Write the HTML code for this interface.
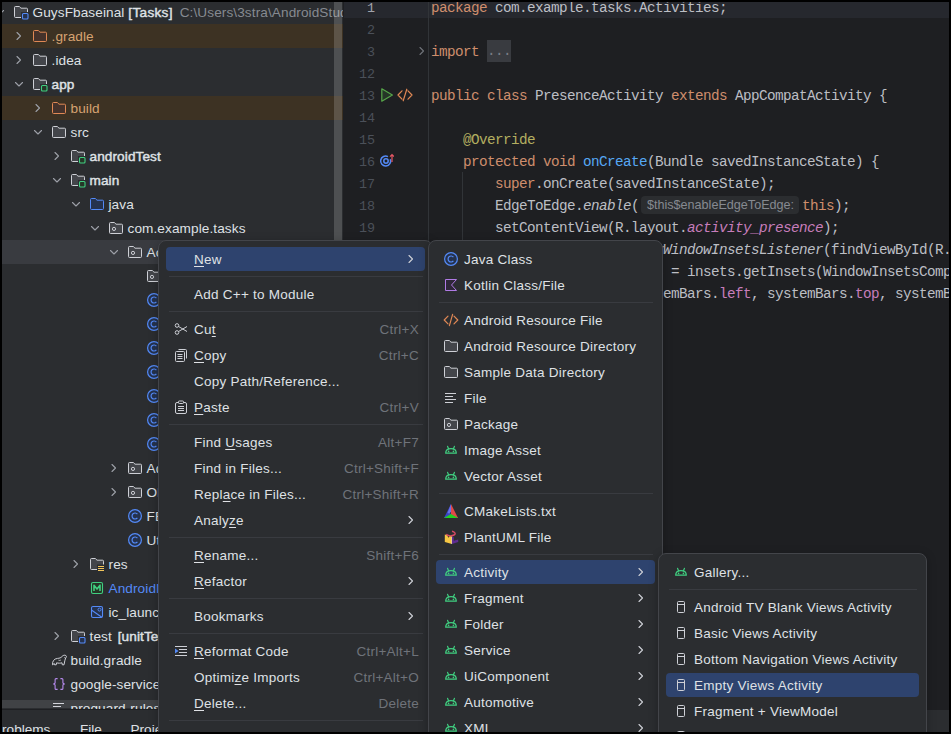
<!DOCTYPE html><html><head><meta charset="utf-8"><style>html,body{margin:0;padding:0;}body{width:951px;height:734px;overflow:hidden;background:#000;position:relative;}b{font-weight:normal;-webkit-text-stroke:0.45px currentColor;}.u{text-decoration:underline;text-underline-offset:1.5px;text-decoration-thickness:1px;}</style></head><body>
<div style="position:absolute;left:2px;top:2px;width:341px;height:730px;background:#2B2D30;overflow:hidden">
<svg style="position:absolute;left:-10.0px;top:2px" width="16" height="16" viewBox="0 0 16 16"><path d="M4.5 6.5l3.5 3.5 3.5-3.5" fill="none" stroke="#9DA0A8" stroke-width="1.1" stroke-linecap="round" stroke-linejoin="round"/></svg>
<svg style="position:absolute;left:10.5px;top:2px" width="16" height="16" viewBox="0 0 16 16"><path d="M2.5 2.5h3.8l1.7 1.7h5.5a1 1 0 0 1 1 1v7.3a1 1 0 0 1-1 1h-11a1 1 0 0 1-1-1v-9a1 1 0 0 1 1-1z" fill="#43454A" stroke="#CED0D6" stroke-width="1"/><rect x="8" y="8" width="8.5" height="8.5" fill="#2B2D30"/><rect x="9.5" y="9.5" width="5.5" height="5.5" rx="1" fill="#25324D" stroke="#548AF7" stroke-width="1.1"/></svg>
<div style="position:absolute;left:30.5px;top:-1px;font:normal 13.6px/24px 'Liberation Sans', sans-serif;color:#DFE1E5;white-space:pre;letter-spacing:0.1px">GuysFbaseinal <b style="letter-spacing:0.3px">[Tasks]</b> <span style="color:#868A91;margin-left:3px">C:\Users\3stra\AndroidStudioProjects</span></div>
<div style="position:absolute;left:0;top:22px;width:341px;height:24px;background:#3D3223"></div>
<svg style="position:absolute;left:9.0px;top:26px" width="16" height="16" viewBox="0 0 16 16"><path d="M6 4.5l3.5 3.5-3.5 3.5" fill="none" stroke="#9DA0A8" stroke-width="1.1" stroke-linecap="round" stroke-linejoin="round"/></svg>
<svg style="position:absolute;left:29.5px;top:26px" width="16" height="16" viewBox="0 0 16 16"><path d="M2.5 2.5h3.8l1.7 1.7h5.5a1 1 0 0 1 1 1v7.3a1 1 0 0 1-1 1h-11a1 1 0 0 1-1-1v-9a1 1 0 0 1 1-1z" fill="#45322B" stroke="#E08855" stroke-width="1"/></svg>
<div style="position:absolute;left:49.5px;top:23px;font:normal 13.6px/24px 'Liberation Sans', sans-serif;color:#DFE1E5;white-space:pre;letter-spacing:0.1px"><span style="color:#D6A372">.gradle</span></div>
<svg style="position:absolute;left:9.0px;top:50px" width="16" height="16" viewBox="0 0 16 16"><path d="M6 4.5l3.5 3.5-3.5 3.5" fill="none" stroke="#9DA0A8" stroke-width="1.1" stroke-linecap="round" stroke-linejoin="round"/></svg>
<svg style="position:absolute;left:29.5px;top:50px" width="16" height="16" viewBox="0 0 16 16"><path d="M2.5 2.5h3.8l1.7 1.7h5.5a1 1 0 0 1 1 1v7.3a1 1 0 0 1-1 1h-11a1 1 0 0 1-1-1v-9a1 1 0 0 1 1-1z" fill="#43454A" stroke="#CED0D6" stroke-width="1"/></svg>
<div style="position:absolute;left:49.5px;top:47px;font:normal 13.6px/24px 'Liberation Sans', sans-serif;color:#DFE1E5;white-space:pre;letter-spacing:0.1px">.idea</div>
<svg style="position:absolute;left:9.0px;top:74px" width="16" height="16" viewBox="0 0 16 16"><path d="M4.5 6.5l3.5 3.5 3.5-3.5" fill="none" stroke="#9DA0A8" stroke-width="1.1" stroke-linecap="round" stroke-linejoin="round"/></svg>
<svg style="position:absolute;left:29.5px;top:74px" width="16" height="16" viewBox="0 0 16 16"><path d="M2.5 2.5h3.8l1.7 1.7h5.5a1 1 0 0 1 1 1v7.3a1 1 0 0 1-1 1h-11a1 1 0 0 1-1-1v-9a1 1 0 0 1 1-1z" fill="#43454A" stroke="#CED0D6" stroke-width="1"/><rect x="8" y="8" width="8.5" height="8.5" fill="#2B2D30"/><rect x="9.5" y="9.5" width="5.5" height="5.5" rx="1" fill="#253627" stroke="#40CF80" stroke-width="1.1"/></svg>
<div style="position:absolute;left:49.5px;top:71px;font:normal 13.6px/24px 'Liberation Sans', sans-serif;color:#DFE1E5;white-space:pre;letter-spacing:0.1px"><b>app</b></div>
<div style="position:absolute;left:0;top:94px;width:341px;height:24px;background:#3D3223"></div>
<svg style="position:absolute;left:28.0px;top:98px" width="16" height="16" viewBox="0 0 16 16"><path d="M6 4.5l3.5 3.5-3.5 3.5" fill="none" stroke="#9DA0A8" stroke-width="1.1" stroke-linecap="round" stroke-linejoin="round"/></svg>
<svg style="position:absolute;left:48.5px;top:98px" width="16" height="16" viewBox="0 0 16 16"><path d="M2.5 2.5h3.8l1.7 1.7h5.5a1 1 0 0 1 1 1v7.3a1 1 0 0 1-1 1h-11a1 1 0 0 1-1-1v-9a1 1 0 0 1 1-1z" fill="#45322B" stroke="#E08855" stroke-width="1"/></svg>
<div style="position:absolute;left:68.5px;top:95px;font:normal 13.6px/24px 'Liberation Sans', sans-serif;color:#DFE1E5;white-space:pre;letter-spacing:0.1px"><span style="color:#D6A372">build</span></div>
<svg style="position:absolute;left:28.0px;top:122px" width="16" height="16" viewBox="0 0 16 16"><path d="M4.5 6.5l3.5 3.5 3.5-3.5" fill="none" stroke="#9DA0A8" stroke-width="1.1" stroke-linecap="round" stroke-linejoin="round"/></svg>
<svg style="position:absolute;left:48.5px;top:122px" width="16" height="16" viewBox="0 0 16 16"><path d="M2.5 2.5h3.8l1.7 1.7h5.5a1 1 0 0 1 1 1v7.3a1 1 0 0 1-1 1h-11a1 1 0 0 1-1-1v-9a1 1 0 0 1 1-1z" fill="#43454A" stroke="#CED0D6" stroke-width="1"/></svg>
<div style="position:absolute;left:68.5px;top:119px;font:normal 13.6px/24px 'Liberation Sans', sans-serif;color:#DFE1E5;white-space:pre;letter-spacing:0.1px">src</div>
<svg style="position:absolute;left:47.0px;top:146px" width="16" height="16" viewBox="0 0 16 16"><path d="M6 4.5l3.5 3.5-3.5 3.5" fill="none" stroke="#9DA0A8" stroke-width="1.1" stroke-linecap="round" stroke-linejoin="round"/></svg>
<svg style="position:absolute;left:67.5px;top:146px" width="16" height="16" viewBox="0 0 16 16"><path d="M2.5 2.5h3.8l1.7 1.7h5.5a1 1 0 0 1 1 1v7.3a1 1 0 0 1-1 1h-11a1 1 0 0 1-1-1v-9a1 1 0 0 1 1-1z" fill="#43454A" stroke="#CED0D6" stroke-width="1"/><rect x="8" y="8" width="8.5" height="8.5" fill="#2B2D30"/><rect x="9.5" y="9.5" width="5.5" height="5.5" rx="1" fill="#253627" stroke="#40CF80" stroke-width="1.1"/></svg>
<div style="position:absolute;left:87.5px;top:143px;font:normal 13.6px/24px 'Liberation Sans', sans-serif;color:#DFE1E5;white-space:pre;letter-spacing:0.1px"><b>androidTest</b></div>
<svg style="position:absolute;left:47.0px;top:170px" width="16" height="16" viewBox="0 0 16 16"><path d="M4.5 6.5l3.5 3.5 3.5-3.5" fill="none" stroke="#9DA0A8" stroke-width="1.1" stroke-linecap="round" stroke-linejoin="round"/></svg>
<svg style="position:absolute;left:67.5px;top:170px" width="16" height="16" viewBox="0 0 16 16"><path d="M2.5 2.5h3.8l1.7 1.7h5.5a1 1 0 0 1 1 1v7.3a1 1 0 0 1-1 1h-11a1 1 0 0 1-1-1v-9a1 1 0 0 1 1-1z" fill="#43454A" stroke="#CED0D6" stroke-width="1"/><rect x="8" y="8" width="8.5" height="8.5" fill="#2B2D30"/><rect x="9.5" y="9.5" width="5.5" height="5.5" rx="1" fill="#253627" stroke="#40CF80" stroke-width="1.1"/></svg>
<div style="position:absolute;left:87.5px;top:167px;font:normal 13.6px/24px 'Liberation Sans', sans-serif;color:#DFE1E5;white-space:pre;letter-spacing:0.1px"><b>main</b></div>
<svg style="position:absolute;left:66.0px;top:194px" width="16" height="16" viewBox="0 0 16 16"><path d="M4.5 6.5l3.5 3.5 3.5-3.5" fill="none" stroke="#9DA0A8" stroke-width="1.1" stroke-linecap="round" stroke-linejoin="round"/></svg>
<svg style="position:absolute;left:86.5px;top:194px" width="16" height="16" viewBox="0 0 16 16"><path d="M2.5 2.5h3.8l1.7 1.7h5.5a1 1 0 0 1 1 1v7.3a1 1 0 0 1-1 1h-11a1 1 0 0 1-1-1v-9a1 1 0 0 1 1-1z" fill="#25324D" stroke="#548AF7" stroke-width="1"/></svg>
<div style="position:absolute;left:106.5px;top:191px;font:normal 13.6px/24px 'Liberation Sans', sans-serif;color:#DFE1E5;white-space:pre;letter-spacing:0.1px">java</div>
<svg style="position:absolute;left:85.0px;top:218px" width="16" height="16" viewBox="0 0 16 16"><path d="M4.5 6.5l3.5 3.5 3.5-3.5" fill="none" stroke="#9DA0A8" stroke-width="1.1" stroke-linecap="round" stroke-linejoin="round"/></svg>
<svg style="position:absolute;left:105.5px;top:218px" width="16" height="16" viewBox="0 0 16 16"><path d="M2.5 2.5h3.8l1.7 1.7h5.5a1 1 0 0 1 1 1v7.3a1 1 0 0 1-1 1h-11a1 1 0 0 1-1-1v-9a1 1 0 0 1 1-1z" fill="#43454A" stroke="#CED0D6" stroke-width="1"/><circle cx="6" cy="8.9" r="1.6" fill="none" stroke="#CED0D6" stroke-width="1"/></svg>
<div style="position:absolute;left:125.5px;top:215px;font:normal 13.6px/24px 'Liberation Sans', sans-serif;color:#DFE1E5;white-space:pre;letter-spacing:0.1px">com.example.tasks</div>
<div style="position:absolute;left:0;top:238px;width:341px;height:24px;background:#393B40"></div>
<svg style="position:absolute;left:104.0px;top:242px" width="16" height="16" viewBox="0 0 16 16"><path d="M4.5 6.5l3.5 3.5 3.5-3.5" fill="none" stroke="#9DA0A8" stroke-width="1.1" stroke-linecap="round" stroke-linejoin="round"/></svg>
<svg style="position:absolute;left:124.5px;top:242px" width="16" height="16" viewBox="0 0 16 16"><path d="M2.5 2.5h3.8l1.7 1.7h5.5a1 1 0 0 1 1 1v7.3a1 1 0 0 1-1 1h-11a1 1 0 0 1-1-1v-9a1 1 0 0 1 1-1z" fill="#43454A" stroke="#CED0D6" stroke-width="1"/><circle cx="6" cy="8.9" r="1.6" fill="none" stroke="#CED0D6" stroke-width="1"/></svg>
<div style="position:absolute;left:144.5px;top:239px;font:normal 13.6px/24px 'Liberation Sans', sans-serif;color:#DFE1E5;white-space:pre;letter-spacing:0.1px">Activities</div>
<svg style="position:absolute;left:143.5px;top:266px" width="16" height="16" viewBox="0 0 16 16"><path d="M2.5 2.5h3.8l1.7 1.7h5.5a1 1 0 0 1 1 1v7.3a1 1 0 0 1-1 1h-11a1 1 0 0 1-1-1v-9a1 1 0 0 1 1-1z" fill="#43454A" stroke="#CED0D6" stroke-width="1"/><circle cx="6" cy="8.9" r="1.6" fill="none" stroke="#CED0D6" stroke-width="1"/></svg>
<div style="position:absolute;left:163.5px;top:263px;font:normal 13.6px/24px 'Liberation Sans', sans-serif;color:#DFE1E5;white-space:pre;letter-spacing:0.1px">Adapters</div>
<svg style="position:absolute;left:143.5px;top:290px" width="16" height="16" viewBox="0 0 16 16"><circle cx="8" cy="8" r="6.4" fill="#25324D" stroke="#548AF7" stroke-width="1.2"/><path d="M10.4 6.1a3 3 0 1 0 0 3.8" fill="none" stroke="#548AF7" stroke-width="1.2"/></svg>
<div style="position:absolute;left:163.5px;top:287px;font:normal 13.6px/24px 'Liberation Sans', sans-serif;color:#DFE1E5;white-space:pre;letter-spacing:0.1px">A</div>
<svg style="position:absolute;left:143.5px;top:314px" width="16" height="16" viewBox="0 0 16 16"><circle cx="8" cy="8" r="6.4" fill="#25324D" stroke="#548AF7" stroke-width="1.2"/><path d="M10.4 6.1a3 3 0 1 0 0 3.8" fill="none" stroke="#548AF7" stroke-width="1.2"/></svg>
<div style="position:absolute;left:163.5px;top:311px;font:normal 13.6px/24px 'Liberation Sans', sans-serif;color:#DFE1E5;white-space:pre;letter-spacing:0.1px">A</div>
<svg style="position:absolute;left:143.5px;top:338px" width="16" height="16" viewBox="0 0 16 16"><circle cx="8" cy="8" r="6.4" fill="#25324D" stroke="#548AF7" stroke-width="1.2"/><path d="M10.4 6.1a3 3 0 1 0 0 3.8" fill="none" stroke="#548AF7" stroke-width="1.2"/></svg>
<div style="position:absolute;left:163.5px;top:335px;font:normal 13.6px/24px 'Liberation Sans', sans-serif;color:#DFE1E5;white-space:pre;letter-spacing:0.1px">A</div>
<svg style="position:absolute;left:143.5px;top:362px" width="16" height="16" viewBox="0 0 16 16"><circle cx="8" cy="8" r="6.4" fill="#25324D" stroke="#548AF7" stroke-width="1.2"/><path d="M10.4 6.1a3 3 0 1 0 0 3.8" fill="none" stroke="#548AF7" stroke-width="1.2"/></svg>
<div style="position:absolute;left:163.5px;top:359px;font:normal 13.6px/24px 'Liberation Sans', sans-serif;color:#DFE1E5;white-space:pre;letter-spacing:0.1px">A</div>
<svg style="position:absolute;left:143.5px;top:386px" width="16" height="16" viewBox="0 0 16 16"><circle cx="8" cy="8" r="6.4" fill="#25324D" stroke="#548AF7" stroke-width="1.2"/><path d="M10.4 6.1a3 3 0 1 0 0 3.8" fill="none" stroke="#548AF7" stroke-width="1.2"/></svg>
<div style="position:absolute;left:163.5px;top:383px;font:normal 13.6px/24px 'Liberation Sans', sans-serif;color:#DFE1E5;white-space:pre;letter-spacing:0.1px">A</div>
<svg style="position:absolute;left:143.5px;top:410px" width="16" height="16" viewBox="0 0 16 16"><circle cx="8" cy="8" r="6.4" fill="#25324D" stroke="#548AF7" stroke-width="1.2"/><path d="M10.4 6.1a3 3 0 1 0 0 3.8" fill="none" stroke="#548AF7" stroke-width="1.2"/></svg>
<div style="position:absolute;left:163.5px;top:407px;font:normal 13.6px/24px 'Liberation Sans', sans-serif;color:#DFE1E5;white-space:pre;letter-spacing:0.1px">A</div>
<svg style="position:absolute;left:143.5px;top:434px" width="16" height="16" viewBox="0 0 16 16"><circle cx="8" cy="8" r="6.4" fill="#25324D" stroke="#548AF7" stroke-width="1.2"/><path d="M10.4 6.1a3 3 0 1 0 0 3.8" fill="none" stroke="#548AF7" stroke-width="1.2"/></svg>
<div style="position:absolute;left:163.5px;top:431px;font:normal 13.6px/24px 'Liberation Sans', sans-serif;color:#DFE1E5;white-space:pre;letter-spacing:0.1px">A</div>
<svg style="position:absolute;left:104.0px;top:458px" width="16" height="16" viewBox="0 0 16 16"><path d="M6 4.5l3.5 3.5-3.5 3.5" fill="none" stroke="#9DA0A8" stroke-width="1.1" stroke-linecap="round" stroke-linejoin="round"/></svg>
<svg style="position:absolute;left:124.5px;top:458px" width="16" height="16" viewBox="0 0 16 16"><path d="M2.5 2.5h3.8l1.7 1.7h5.5a1 1 0 0 1 1 1v7.3a1 1 0 0 1-1 1h-11a1 1 0 0 1-1-1v-9a1 1 0 0 1 1-1z" fill="#43454A" stroke="#CED0D6" stroke-width="1"/><circle cx="6" cy="8.9" r="1.6" fill="none" stroke="#CED0D6" stroke-width="1"/></svg>
<div style="position:absolute;left:144.5px;top:455px;font:normal 13.6px/24px 'Liberation Sans', sans-serif;color:#DFE1E5;white-space:pre;letter-spacing:0.1px">Adapters</div>
<svg style="position:absolute;left:104.0px;top:482px" width="16" height="16" viewBox="0 0 16 16"><path d="M6 4.5l3.5 3.5-3.5 3.5" fill="none" stroke="#9DA0A8" stroke-width="1.1" stroke-linecap="round" stroke-linejoin="round"/></svg>
<svg style="position:absolute;left:124.5px;top:482px" width="16" height="16" viewBox="0 0 16 16"><path d="M2.5 2.5h3.8l1.7 1.7h5.5a1 1 0 0 1 1 1v7.3a1 1 0 0 1-1 1h-11a1 1 0 0 1-1-1v-9a1 1 0 0 1 1-1z" fill="#43454A" stroke="#CED0D6" stroke-width="1"/><circle cx="6" cy="8.9" r="1.6" fill="none" stroke="#CED0D6" stroke-width="1"/></svg>
<div style="position:absolute;left:144.5px;top:479px;font:normal 13.6px/24px 'Liberation Sans', sans-serif;color:#DFE1E5;white-space:pre;letter-spacing:0.1px">Objects</div>
<svg style="position:absolute;left:124.5px;top:506px" width="16" height="16" viewBox="0 0 16 16"><circle cx="8" cy="8" r="6.4" fill="#25324D" stroke="#548AF7" stroke-width="1.2"/><path d="M10.4 6.1a3 3 0 1 0 0 3.8" fill="none" stroke="#548AF7" stroke-width="1.2"/></svg>
<div style="position:absolute;left:144.5px;top:503px;font:normal 13.6px/24px 'Liberation Sans', sans-serif;color:#DFE1E5;white-space:pre;letter-spacing:0.1px">FBRef</div>
<svg style="position:absolute;left:124.5px;top:530px" width="16" height="16" viewBox="0 0 16 16"><circle cx="8" cy="8" r="6.4" fill="#25324D" stroke="#548AF7" stroke-width="1.2"/><path d="M10.4 6.1a3 3 0 1 0 0 3.8" fill="none" stroke="#548AF7" stroke-width="1.2"/></svg>
<div style="position:absolute;left:144.5px;top:527px;font:normal 13.6px/24px 'Liberation Sans', sans-serif;color:#DFE1E5;white-space:pre;letter-spacing:0.1px">Utils</div>
<svg style="position:absolute;left:66.0px;top:554px" width="16" height="16" viewBox="0 0 16 16"><path d="M6 4.5l3.5 3.5-3.5 3.5" fill="none" stroke="#9DA0A8" stroke-width="1.1" stroke-linecap="round" stroke-linejoin="round"/></svg>
<svg style="position:absolute;left:86.5px;top:554px" width="16" height="16" viewBox="0 0 16 16"><path d="M2.5 2.5h3.8l1.7 1.7h5.5a1 1 0 0 1 1 1v7.3a1 1 0 0 1-1 1h-11a1 1 0 0 1-1-1v-9a1 1 0 0 1 1-1z" fill="#43454A" stroke="#CED0D6" stroke-width="1"/><rect x="8" y="8.5" width="9" height="8" fill="#2B2D30"/><path d="M9 10.5h6M9 12.5h6M9 14.5h6" stroke="#F2C55C" stroke-width="1.1"/></svg>
<div style="position:absolute;left:106.5px;top:551px;font:normal 13.6px/24px 'Liberation Sans', sans-serif;color:#DFE1E5;white-space:pre;letter-spacing:0.1px">res</div>
<svg style="position:absolute;left:86.5px;top:578px" width="16" height="16" viewBox="0 0 16 16"><rect x="2.5" y="2.5" width="11" height="11" rx="1.5" fill="#253627" stroke="#40CF80" stroke-width="1.1"/><path d="M5 11V5.2l3 3.8 3-3.8V11" fill="none" stroke="#40CF80" stroke-width="1.6" stroke-linejoin="round"/></svg>
<div style="position:absolute;left:106.5px;top:575px;font:normal 13.6px/24px 'Liberation Sans', sans-serif;color:#DFE1E5;white-space:pre;letter-spacing:0.1px"><span style="color:#548AF7">AndroidManifest.xml</span></div>
<svg style="position:absolute;left:86.5px;top:602px" width="16" height="16" viewBox="0 0 16 16"><rect x="2.5" y="2.5" width="11" height="11" rx="1.5" fill="#25324D" stroke="#548AF7" stroke-width="1.1"/><path d="M2.8 6.2l10 7" stroke="#548AF7" stroke-width="1.1"/><circle cx="10.5" cy="5.6" r="1.5" fill="none" stroke="#548AF7" stroke-width="1"/></svg>
<div style="position:absolute;left:106.5px;top:599px;font:normal 13.6px/24px 'Liberation Sans', sans-serif;color:#DFE1E5;white-space:pre;letter-spacing:0.1px">ic_launcher-playstore.png</div>
<svg style="position:absolute;left:47.0px;top:626px" width="16" height="16" viewBox="0 0 16 16"><path d="M6 4.5l3.5 3.5-3.5 3.5" fill="none" stroke="#9DA0A8" stroke-width="1.1" stroke-linecap="round" stroke-linejoin="round"/></svg>
<svg style="position:absolute;left:67.5px;top:626px" width="16" height="16" viewBox="0 0 16 16"><path d="M2.5 2.5h3.8l1.7 1.7h5.5a1 1 0 0 1 1 1v7.3a1 1 0 0 1-1 1h-11a1 1 0 0 1-1-1v-9a1 1 0 0 1 1-1z" fill="#43454A" stroke="#CED0D6" stroke-width="1"/><rect x="8" y="8" width="8.5" height="8.5" fill="#2B2D30"/><rect x="9.5" y="9.5" width="5.5" height="5.5" rx="1" fill="#25324D" stroke="#548AF7" stroke-width="1.1"/></svg>
<div style="position:absolute;left:87.5px;top:623px;font:normal 13.6px/24px 'Liberation Sans', sans-serif;color:#DFE1E5;white-space:pre;letter-spacing:0.1px">test <b style="margin-left:2px">[unitTest]</b></div>
<svg style="position:absolute;left:48.5px;top:650px" width="16" height="16" viewBox="0 0 16 16"><path d="M1.5 12.8C1.2 9.3 3 6.8 6.5 6.4c2-.2 3.3-.4 4.5-1.9 1-1.2 2.6-1.7 3.8-1 1 .6.8 2.1-.2 2.5l-.8 2.8-.8 4H11.3l-.3-2c-1.4.5-3.8.5-5.4 0l-.4 2H3.6l-.3-1.3z" fill="none" stroke="#CED0D6" stroke-width="1" stroke-linejoin="round"/><path d="M14.6 6c-.7.3-1.2-.3-.8-.8M7.5 8.2c.9.4 1.8.3 2.4-.3" fill="none" stroke="#CED0D6" stroke-width=".9"/></svg>
<div style="position:absolute;left:68.5px;top:647px;font:normal 13.6px/24px 'Liberation Sans', sans-serif;color:#DFE1E5;white-space:pre;letter-spacing:0.1px">build.gradle</div>
<svg style="position:absolute;left:48.5px;top:674px" width="16" height="16" viewBox="0 0 16 16"><path d="M6.6 2.6H5.1a1 1 0 0 0-1 1V7L2.7 8 4.1 9v3.4a1 1 0 0 0 1 1h1.5M9.4 2.6h1.5a1 1 0 0 1 1 1V7l1.4 1-1.4 1v3.4a1 1 0 0 1-1 1H9.4" fill="none" stroke="#B589EC" stroke-width="1.1" stroke-linejoin="round"/></svg>
<div style="position:absolute;left:68.5px;top:671px;font:normal 13.6px/24px 'Liberation Sans', sans-serif;color:#DFE1E5;white-space:pre;letter-spacing:0.1px">google-services.json</div>
<svg style="position:absolute;left:48.5px;top:698px" width="16" height="16" viewBox="0 0 16 16"><path d="M2 3.5h11M2 6.5h8M2 9.5h11M2 12.5h8" stroke="#CED0D6" stroke-width="1"/></svg>
<div style="position:absolute;left:68.5px;top:695px;font:normal 13.6px/24px 'Liberation Sans', sans-serif;color:#DFE1E5;white-space:pre;letter-spacing:0.1px">proguard-rules.pro</div>
<div style="position:absolute;left:0;top:698px;width:341px;height:8px;background:rgba(255,255,255,0.1)"></div>
<div style="position:absolute;left:332px;top:0;width:8px;height:238px;background:rgba(255,255,255,0.17)"></div>
</div>
<div style="position:absolute;left:343px;top:2px;width:606px;height:730px;background:#1E1F22;overflow:hidden">
<div style="position:absolute;left:1px;top:-6px;width:620px;height:22px;background:#26282E"></div>
<div style="position:absolute;left:85px;top:0;width:1px;height:730px;background:#313438"></div>
<div style="position:absolute;left:-12px;top:-4.5px;width:44px;text-align:right;font:13.4px/22px 'Liberation Mono', monospace;color:#A1A3AB">1</div>
<div style="position:absolute;left:88px;top:-5px;font:14.3px/22px 'Liberation Mono', monospace;letter-spacing:-0.58px;white-space:pre"><span style="color:#CF8E6D;">package </span><span style="color:#BCBEC4;">com.example.tasks.Activities;</span></div>
<div style="position:absolute;left:-12px;top:17.5px;width:44px;text-align:right;font:13.4px/22px 'Liberation Mono', monospace;color:#4B5059">2</div>
<div style="position:absolute;left:-12px;top:39.5px;width:44px;text-align:right;font:13.4px/22px 'Liberation Mono', monospace;color:#4B5059">3</div>
<div style="position:absolute;left:88px;top:39px;font:14.3px/22px 'Liberation Mono', monospace;letter-spacing:-0.58px;white-space:pre"><span style="color:#CF8E6D;">import </span><span style="color:#7A7E85;background:#393B40;display:inline-block;height:22px;vertical-align:top;position:relative;top:-1px">...</span></div>
<div style="position:absolute;left:-12px;top:61.5px;width:44px;text-align:right;font:13.4px/22px 'Liberation Mono', monospace;color:#4B5059">12</div>
<div style="position:absolute;left:-12px;top:83.5px;width:44px;text-align:right;font:13.4px/22px 'Liberation Mono', monospace;color:#4B5059">13</div>
<div style="position:absolute;left:88px;top:83px;font:14.3px/22px 'Liberation Mono', monospace;letter-spacing:-0.58px;white-space:pre"><span style="color:#CF8E6D;">public class </span><span style="color:#BCBEC4;">PresenceActivity </span><span style="color:#CF8E6D;">extends </span><span style="color:#BCBEC4;">AppCompatActivity {</span></div>
<div style="position:absolute;left:-12px;top:105.5px;width:44px;text-align:right;font:13.4px/22px 'Liberation Mono', monospace;color:#4B5059">14</div>
<div style="position:absolute;left:-12px;top:127.5px;width:44px;text-align:right;font:13.4px/22px 'Liberation Mono', monospace;color:#4B5059">15</div>
<div style="position:absolute;left:88px;top:127px;font:14.3px/22px 'Liberation Mono', monospace;letter-spacing:-0.58px;white-space:pre"><span style="color:#BCBEC4;">    </span><span style="color:#B3AE60;">@Override</span></div>
<div style="position:absolute;left:-12px;top:149.5px;width:44px;text-align:right;font:13.4px/22px 'Liberation Mono', monospace;color:#4B5059">16</div>
<div style="position:absolute;left:88px;top:149px;font:14.3px/22px 'Liberation Mono', monospace;letter-spacing:-0.58px;white-space:pre"><span style="color:#BCBEC4;">    </span><span style="color:#CF8E6D;">protected void </span><span style="color:#56A8F5;">onCreate</span><span style="color:#BCBEC4;">(Bundle savedInstanceState) {</span></div>
<div style="position:absolute;left:-12px;top:171.5px;width:44px;text-align:right;font:13.4px/22px 'Liberation Mono', monospace;color:#4B5059">17</div>
<div style="position:absolute;left:88px;top:171px;font:14.3px/22px 'Liberation Mono', monospace;letter-spacing:-0.58px;white-space:pre"><span style="color:#BCBEC4;">        </span><span style="color:#CF8E6D;">super</span><span style="color:#BCBEC4;">.onCreate(savedInstanceState);</span></div>
<div style="position:absolute;left:-12px;top:193.5px;width:44px;text-align:right;font:13.4px/22px 'Liberation Mono', monospace;color:#4B5059">18</div>
<div style="position:absolute;left:88px;top:193px;font:14.3px/22px 'Liberation Mono', monospace;letter-spacing:-0.58px;white-space:pre"><span style="color:#BCBEC4;">        EdgeToEdge.</span><span style="color:#BCBEC4;font-style:italic;">enable</span><span style="color:#BCBEC4;">(</span><span style="display:inline-block;width:163px"></span><span style="color:#CF8E6D;">this</span><span style="color:#BCBEC4;">);</span></div>
<div style="position:absolute;left:-12px;top:215.5px;width:44px;text-align:right;font:13.4px/22px 'Liberation Mono', monospace;color:#4B5059">19</div>
<div style="position:absolute;left:88px;top:215px;font:14.3px/22px 'Liberation Mono', monospace;letter-spacing:-0.58px;white-space:pre"><span style="color:#BCBEC4;">        setContentView(R.layout.</span><span style="color:#C77DBB;font-style:italic;">activity_presence</span><span style="color:#BCBEC4;">);</span></div>
<div style="position:absolute;left:-12px;top:237.5px;width:44px;text-align:right;font:13.4px/22px 'Liberation Mono', monospace;color:#4B5059">20</div>
<div style="position:absolute;left:88px;top:237px;font:14.3px/22px 'Liberation Mono', monospace;letter-spacing:-0.58px;white-space:pre"><span style="color:#BCBEC4;">        ViewCompat.</span><span style="color:#BCBEC4;font-style:italic;">setOnApplyWindowInsetsListener</span><span style="color:#BCBEC4;">(findViewById(R.id.main), (v, insets) -> {</span></div>
<div style="position:absolute;left:-12px;top:259.5px;width:44px;text-align:right;font:13.4px/22px 'Liberation Mono', monospace;color:#4B5059">21</div>
<div style="position:absolute;left:88px;top:259px;font:14.3px/22px 'Liberation Mono', monospace;letter-spacing:-0.58px;white-space:pre"><span style="color:#BCBEC4;">            Insets systemBars = insets.getInsets(WindowInsetsCompat.Type.systemBars());</span></div>
<div style="position:absolute;left:-12px;top:281.5px;width:44px;text-align:right;font:13.4px/22px 'Liberation Mono', monospace;color:#4B5059">22</div>
<div style="position:absolute;left:88px;top:281px;font:14.3px/22px 'Liberation Mono', monospace;letter-spacing:-0.58px;white-space:pre"><span style="color:#BCBEC4;">            v.setPadding(systemBars.</span><span style="color:#C77DBB;">left</span><span style="color:#BCBEC4;">, systemBars.</span><span style="color:#C77DBB;">top</span><span style="color:#BCBEC4;">, systemBars.</span><span style="color:#C77DBB;">right</span><span style="color:#BCBEC4;">, systemBars.</span><span style="color:#C77DBB;">bottom</span><span style="color:#BCBEC4;">);</span></div>
<div style="position:absolute;left:-12px;top:303.5px;width:44px;text-align:right;font:13.4px/22px 'Liberation Mono', monospace;color:#4B5059">23</div>
<div style="position:absolute;left:88px;top:303px;font:14.3px/22px 'Liberation Mono', monospace;letter-spacing:-0.58px;white-space:pre"><span style="color:#BCBEC4;">            </span><span style="color:#CF8E6D;">return </span><span style="color:#BCBEC4;">insets;</span></div>
<div style="position:absolute;left:-12px;top:325.5px;width:44px;text-align:right;font:13.4px/22px 'Liberation Mono', monospace;color:#4B5059">24</div>
<div style="position:absolute;left:88px;top:325px;font:14.3px/22px 'Liberation Mono', monospace;letter-spacing:-0.58px;white-space:pre"><span style="color:#BCBEC4;">        });</span></div>
<div style="position:absolute;left:-12px;top:347.5px;width:44px;text-align:right;font:13.4px/22px 'Liberation Mono', monospace;color:#4B5059">25</div>
<div style="position:absolute;left:88px;top:347px;font:14.3px/22px 'Liberation Mono', monospace;letter-spacing:-0.58px;white-space:pre"><span style="color:#BCBEC4;">    }</span></div>
<div style="position:absolute;left:-12px;top:369.5px;width:44px;text-align:right;font:13.4px/22px 'Liberation Mono', monospace;color:#4B5059">26</div>
<div style="position:absolute;left:-12px;top:391.5px;width:44px;text-align:right;font:13.4px/22px 'Liberation Mono', monospace;color:#4B5059">27</div>
<div style="position:absolute;left:88px;top:391px;font:14.3px/22px 'Liberation Mono', monospace;letter-spacing:-0.58px;white-space:pre"><span style="color:#BCBEC4;">}</span></div>
<div style="position:absolute;left:-12px;top:413.5px;width:44px;text-align:right;font:13.4px/22px 'Liberation Mono', monospace;color:#4B5059">28</div>
<div style="position:absolute;left:-12px;top:435.5px;width:44px;text-align:right;font:13.4px/22px 'Liberation Mono', monospace;color:#4B5059">29</div>
<div style="position:absolute;left:-12px;top:457.5px;width:44px;text-align:right;font:13.4px/22px 'Liberation Mono', monospace;color:#4B5059">30</div>
<div style="position:absolute;left:-12px;top:479.5px;width:44px;text-align:right;font:13.4px/22px 'Liberation Mono', monospace;color:#4B5059">31</div>
<div style="position:absolute;left:-12px;top:501.5px;width:44px;text-align:right;font:13.4px/22px 'Liberation Mono', monospace;color:#4B5059">32</div>
<div style="position:absolute;left:-12px;top:523.5px;width:44px;text-align:right;font:13.4px/22px 'Liberation Mono', monospace;color:#4B5059">33</div>
<div style="position:absolute;left:-12px;top:545.5px;width:44px;text-align:right;font:13.4px/22px 'Liberation Mono', monospace;color:#4B5059">34</div>
<div style="position:absolute;left:-12px;top:567.5px;width:44px;text-align:right;font:13.4px/22px 'Liberation Mono', monospace;color:#4B5059">35</div>
<div style="position:absolute;left:-12px;top:589.5px;width:44px;text-align:right;font:13.4px/22px 'Liberation Mono', monospace;color:#4B5059">36</div>
<div style="position:absolute;left:-12px;top:611.5px;width:44px;text-align:right;font:13.4px/22px 'Liberation Mono', monospace;color:#4B5059">37</div>
<div style="position:absolute;left:-12px;top:633.5px;width:44px;text-align:right;font:13.4px/22px 'Liberation Mono', monospace;color:#4B5059">38</div>
<div style="position:absolute;left:-12px;top:655.5px;width:44px;text-align:right;font:13.4px/22px 'Liberation Mono', monospace;color:#4B5059">39</div>
<div style="position:absolute;left:-12px;top:677.5px;width:44px;text-align:right;font:13.4px/22px 'Liberation Mono', monospace;color:#4B5059">40</div>
<div style="position:absolute;left:-12px;top:699.5px;width:44px;text-align:right;font:13.4px/22px 'Liberation Mono', monospace;color:#4B5059">41</div>
<svg style="position:absolute;left:71px;top:41px" width="16" height="16" viewBox="0 0 16 16"><path d="M6 4.5l3.5 3.5-3.5 3.5" fill="none" stroke="#6F737A" stroke-width="1.1" stroke-linecap="round" stroke-linejoin="round"/></svg>
<div style="position:absolute;left:119px;top:170px;width:1px;height:176px;background:#313438"></div>
<div style="position:absolute;left:298px;top:194px;width:158px;height:18px;border-radius:4px;background:#2B2D30"></div>
<div style="position:absolute;left:304px;top:194px;font:12.6px/18px 'Liberation Sans', sans-serif;color:#868A91;white-space:pre">$this$enableEdgeToEdge:</div>
<svg style="position:absolute;left:36px;top:85px" width="16" height="16" viewBox="0 0 16 16"><path d="M2.8 1.8v12.4l10.6-6.2z" fill="#253627" stroke="#57A64A" stroke-width="1.2" stroke-linejoin="round"/></svg>
<svg style="position:absolute;left:54px;top:85px" width="16" height="16" viewBox="0 0 16 16"><path d="M5 3.8L1 8l4 4.2M11 3.8L15 8l-4 4.2M9.8 2.2l-3.6 11.6" fill="none" stroke="#E08855" stroke-width="1.2" stroke-linecap="round" stroke-linejoin="round"/></svg>
<svg style="position:absolute;left:35px;top:150px" width="16" height="16" viewBox="0 0 16 16"><path d="M12.3 7.2A5 5 0 1 1 10 4.6" fill="none" stroke="#548AF7" stroke-width="1.5"/><circle cx="8" cy="9" r="2.2" fill="none" stroke="#548AF7" stroke-width="1.5"/><path d="M14 10V2.5M12 4.6l2-2.1 2 2.1" fill="none" stroke="#E55765" stroke-width="1.2"/></svg>
</div>
<div style="position:absolute;left:2px;top:709px;width:947px;height:1px;background:#1E1F22"></div>
<div style="position:absolute;left:2px;top:710px;width:947px;height:24px;background:#2B2D30;overflow:hidden">
<div style="position:absolute;left:-9px;top:8px;font:normal 13.6px/24px 'Liberation Sans', sans-serif;color:#DFE1E5;white-space:pre;">Problems</div>
<div style="position:absolute;left:78px;top:8px;font:normal 13.6px/24px 'Liberation Sans', sans-serif;color:#DFE1E5;white-space:pre;">File</div>
<div style="position:absolute;left:128.5px;top:8px;font:normal 13.6px/24px 'Liberation Sans', sans-serif;color:#DFE1E5;white-space:pre;">Project Errors</div>
</div>
<div style="position:absolute;left:158px;top:240px;width:273px;height:520px;background:#2B2D30;border:1px solid #43454A;border-radius:8px;box-shadow:0 2px 10px rgba(0,0,0,0.25)"></div>
<div style="position:absolute;left:166px;top:247px;width:259px;height:24px;border-radius:4px;background:#2E436E"></div>
<div style="position:absolute;left:194px;top:247px;font:13.5px/26px 'Liberation Sans', sans-serif;letter-spacing:0.25px;color:#DFE1E5;white-space:pre"><span class="u">N</span>ew</div>
<svg style="position:absolute;left:403px;top:251px" width="16" height="16" viewBox="0 0 16 16"><path d="M6 4.5l3.5 3.5-3.5 3.5" fill="none" stroke="#CED0D6" stroke-width="1.1" stroke-linecap="round" stroke-linejoin="round"/></svg>
<div style="position:absolute;left:169px;top:276px;width:254px;height:1px;background:#393B40"></div>
<div style="position:absolute;left:194px;top:282px;font:13.5px/26px 'Liberation Sans', sans-serif;letter-spacing:0.25px;color:#DFE1E5;white-space:pre">Add C++ to Module</div>
<div style="position:absolute;left:169px;top:311px;width:254px;height:1px;background:#393B40"></div>
<svg style="position:absolute;left:173px;top:321px" width="16" height="16" viewBox="0 0 16 16"><circle cx="4" cy="4.5" r="1.8" fill="none" stroke="#CED0D6" stroke-width="1"/><circle cx="4" cy="11.5" r="1.8" fill="none" stroke="#CED0D6" stroke-width="1"/><path d="M5.6 5.5L14 10.5M5.6 10.5L14 5.5" stroke="#CED0D6" stroke-width="1"/></svg>
<div style="position:absolute;left:194px;top:317px;font:13.5px/26px 'Liberation Sans', sans-serif;letter-spacing:0.25px;color:#DFE1E5;white-space:pre">Cu<span class="u">t</span></div>
<div style="position:absolute;right:532px;top:317px;font:13.5px/26px 'Liberation Sans', sans-serif;letter-spacing:0.25px;color:#6F737A;white-space:pre">Ctrl+X</div>
<svg style="position:absolute;left:173px;top:347px" width="16" height="16" viewBox="0 0 16 16"><path d="M5.5 2.5h7a1 1 0 0 1 1 1v8" fill="none" stroke="#CED0D6" stroke-width="1"/><rect x="2.5" y="4.5" width="9" height="10" rx="1" fill="none" stroke="#CED0D6" stroke-width="1"/><path d="M4.5 7.5h5M4.5 9.5h5M4.5 11.5h5" stroke="#CED0D6" stroke-width="1"/></svg>
<div style="position:absolute;left:194px;top:343px;font:13.5px/26px 'Liberation Sans', sans-serif;letter-spacing:0.25px;color:#DFE1E5;white-space:pre"><span class="u">C</span>opy</div>
<div style="position:absolute;right:532px;top:343px;font:13.5px/26px 'Liberation Sans', sans-serif;letter-spacing:0.25px;color:#6F737A;white-space:pre">Ctrl+C</div>
<div style="position:absolute;left:194px;top:369px;font:13.5px/26px 'Liberation Sans', sans-serif;letter-spacing:0.25px;color:#DFE1E5;white-space:pre">Copy Path/Reference...</div>
<svg style="position:absolute;left:173px;top:399px" width="16" height="16" viewBox="0 0 16 16"><rect x="2.5" y="3.5" width="11" height="11" rx="1.5" fill="none" stroke="#CED0D6" stroke-width="1"/><rect x="5.5" y="2" width="5" height="2.5" rx=".8" fill="#2B2D30" stroke="#CED0D6" stroke-width="1"/><path d="M5 7.5h6M5 9.5h6M5 11.5h6" stroke="#CED0D6" stroke-width="1"/></svg>
<div style="position:absolute;left:194px;top:395px;font:13.5px/26px 'Liberation Sans', sans-serif;letter-spacing:0.25px;color:#DFE1E5;white-space:pre"><span class="u">P</span>aste</div>
<div style="position:absolute;right:532px;top:395px;font:13.5px/26px 'Liberation Sans', sans-serif;letter-spacing:0.25px;color:#6F737A;white-space:pre">Ctrl+V</div>
<div style="position:absolute;left:169px;top:424px;width:254px;height:1px;background:#393B40"></div>
<div style="position:absolute;left:194px;top:430px;font:13.5px/26px 'Liberation Sans', sans-serif;letter-spacing:0.25px;color:#DFE1E5;white-space:pre">Find <span class="u">U</span>sages</div>
<div style="position:absolute;right:532px;top:430px;font:13.5px/26px 'Liberation Sans', sans-serif;letter-spacing:0.25px;color:#6F737A;white-space:pre">Alt+F7</div>
<div style="position:absolute;left:194px;top:456px;font:13.5px/26px 'Liberation Sans', sans-serif;letter-spacing:0.25px;color:#DFE1E5;white-space:pre">Find in Files...</div>
<div style="position:absolute;right:532px;top:456px;font:13.5px/26px 'Liberation Sans', sans-serif;letter-spacing:0.25px;color:#6F737A;white-space:pre">Ctrl+Shift+F</div>
<div style="position:absolute;left:194px;top:482px;font:13.5px/26px 'Liberation Sans', sans-serif;letter-spacing:0.25px;color:#DFE1E5;white-space:pre">Repl<span class="u">a</span>ce in Files...</div>
<div style="position:absolute;right:532px;top:482px;font:13.5px/26px 'Liberation Sans', sans-serif;letter-spacing:0.25px;color:#6F737A;white-space:pre">Ctrl+Shift+R</div>
<div style="position:absolute;left:194px;top:508px;font:13.5px/26px 'Liberation Sans', sans-serif;letter-spacing:0.25px;color:#DFE1E5;white-space:pre">Analy<span class="u">z</span>e</div>
<svg style="position:absolute;left:403px;top:512px" width="16" height="16" viewBox="0 0 16 16"><path d="M6 4.5l3.5 3.5-3.5 3.5" fill="none" stroke="#CED0D6" stroke-width="1.1" stroke-linecap="round" stroke-linejoin="round"/></svg>
<div style="position:absolute;left:169px;top:537px;width:254px;height:1px;background:#393B40"></div>
<div style="position:absolute;left:194px;top:543px;font:13.5px/26px 'Liberation Sans', sans-serif;letter-spacing:0.25px;color:#DFE1E5;white-space:pre"><span class="u">R</span>ename...</div>
<div style="position:absolute;right:532px;top:543px;font:13.5px/26px 'Liberation Sans', sans-serif;letter-spacing:0.25px;color:#6F737A;white-space:pre">Shift+F6</div>
<div style="position:absolute;left:194px;top:569px;font:13.5px/26px 'Liberation Sans', sans-serif;letter-spacing:0.25px;color:#DFE1E5;white-space:pre"><span class="u">R</span>efactor</div>
<svg style="position:absolute;left:403px;top:573px" width="16" height="16" viewBox="0 0 16 16"><path d="M6 4.5l3.5 3.5-3.5 3.5" fill="none" stroke="#CED0D6" stroke-width="1.1" stroke-linecap="round" stroke-linejoin="round"/></svg>
<div style="position:absolute;left:169px;top:598px;width:254px;height:1px;background:#393B40"></div>
<div style="position:absolute;left:194px;top:604px;font:13.5px/26px 'Liberation Sans', sans-serif;letter-spacing:0.25px;color:#DFE1E5;white-space:pre">Bookmarks</div>
<svg style="position:absolute;left:403px;top:608px" width="16" height="16" viewBox="0 0 16 16"><path d="M6 4.5l3.5 3.5-3.5 3.5" fill="none" stroke="#CED0D6" stroke-width="1.1" stroke-linecap="round" stroke-linejoin="round"/></svg>
<div style="position:absolute;left:169px;top:633px;width:254px;height:1px;background:#393B40"></div>
<svg style="position:absolute;left:173px;top:643px" width="16" height="16" viewBox="0 0 16 16"><path d="M2 3.5h12M6 6.5h8M6 9.5h8M2 12.5h12" stroke="#CED0D6" stroke-width="1"/><path d="M2 5.5l3.5 2.5-3.5 2.5z" fill="#548AF7"/></svg>
<div style="position:absolute;left:194px;top:639px;font:13.5px/26px 'Liberation Sans', sans-serif;letter-spacing:0.25px;color:#DFE1E5;white-space:pre"><span class="u">R</span>eformat Code</div>
<div style="position:absolute;right:532px;top:639px;font:13.5px/26px 'Liberation Sans', sans-serif;letter-spacing:0.25px;color:#6F737A;white-space:pre">Ctrl+Alt+L</div>
<div style="position:absolute;left:194px;top:665px;font:13.5px/26px 'Liberation Sans', sans-serif;letter-spacing:0.25px;color:#DFE1E5;white-space:pre">Optimi<span class="u">z</span>e Imports</div>
<div style="position:absolute;right:532px;top:665px;font:13.5px/26px 'Liberation Sans', sans-serif;letter-spacing:0.25px;color:#6F737A;white-space:pre">Ctrl+Alt+O</div>
<div style="position:absolute;left:194px;top:691px;font:13.5px/26px 'Liberation Sans', sans-serif;letter-spacing:0.25px;color:#DFE1E5;white-space:pre"><span class="u">D</span>elete...</div>
<div style="position:absolute;right:532px;top:691px;font:13.5px/26px 'Liberation Sans', sans-serif;letter-spacing:0.25px;color:#6F737A;white-space:pre">Delete</div>
<div style="position:absolute;left:169px;top:720px;width:254px;height:1px;background:#393B40"></div>
<div style="position:absolute;left:194px;top:726px;font:13.5px/26px 'Liberation Sans', sans-serif;letter-spacing:0.25px;color:#DFE1E5;white-space:pre">Override File Type</div>
<div style="position:absolute;left:428px;top:240px;width:233px;height:560px;background:#2B2D30;border:1px solid #43454A;border-radius:8px;box-shadow:0 2px 10px rgba(0,0,0,0.25)"></div>
<svg style="position:absolute;left:443px;top:251px" width="16" height="16" viewBox="0 0 16 16"><circle cx="8" cy="8" r="6.4" fill="#25324D" stroke="#548AF7" stroke-width="1.2"/><path d="M10.4 6.1a3 3 0 1 0 0 3.8" fill="none" stroke="#548AF7" stroke-width="1.2"/></svg>
<div style="position:absolute;left:464px;top:247px;font:13.5px/26px 'Liberation Sans', sans-serif;letter-spacing:0.25px;color:#DFE1E5;white-space:pre">Java Class</div>
<svg style="position:absolute;left:443px;top:277px" width="16" height="16" viewBox="0 0 16 16"><path d="M2.5 2.5h11l-5 5.5 5 5.5h-11z" fill="#2F2739" stroke="#B07BE5" stroke-width="1" stroke-linejoin="round"/></svg>
<div style="position:absolute;left:464px;top:273px;font:13.5px/26px 'Liberation Sans', sans-serif;letter-spacing:0.25px;color:#DFE1E5;white-space:pre">Kotlin Class/File</div>
<div style="position:absolute;left:439px;top:302px;width:214px;height:1px;background:#393B40"></div>
<svg style="position:absolute;left:443px;top:312px" width="16" height="16" viewBox="0 0 16 16"><path d="M5 4.2L1.2 8 5 11.8M11 4.2L14.8 8 11 11.8M9.6 2.3L6.4 13.7" fill="none" stroke="#E08855" stroke-width="1.2" stroke-linecap="round" stroke-linejoin="round"/></svg>
<div style="position:absolute;left:464px;top:308px;font:13.5px/26px 'Liberation Sans', sans-serif;letter-spacing:0.25px;color:#DFE1E5;white-space:pre">Android Resource File</div>
<svg style="position:absolute;left:443px;top:338px" width="16" height="16" viewBox="0 0 16 16"><path d="M2.5 2.5h3.8l1.7 1.7h5.5a1 1 0 0 1 1 1v7.3a1 1 0 0 1-1 1h-11a1 1 0 0 1-1-1v-9a1 1 0 0 1 1-1z" fill="#43454A" stroke="#CED0D6" stroke-width="1"/></svg>
<div style="position:absolute;left:464px;top:334px;font:13.5px/26px 'Liberation Sans', sans-serif;letter-spacing:0.25px;color:#DFE1E5;white-space:pre">Android Resource Directory</div>
<svg style="position:absolute;left:443px;top:364px" width="16" height="16" viewBox="0 0 16 16"><path d="M2.5 2.5h3.8l1.7 1.7h5.5a1 1 0 0 1 1 1v7.3a1 1 0 0 1-1 1h-11a1 1 0 0 1-1-1v-9a1 1 0 0 1 1-1z" fill="#43454A" stroke="#CED0D6" stroke-width="1"/></svg>
<div style="position:absolute;left:464px;top:360px;font:13.5px/26px 'Liberation Sans', sans-serif;letter-spacing:0.25px;color:#DFE1E5;white-space:pre">Sample Data Directory</div>
<svg style="position:absolute;left:443px;top:390px" width="16" height="16" viewBox="0 0 16 16"><path d="M2 3.5h11M2 6.5h8M2 9.5h11M2 12.5h8" stroke="#CED0D6" stroke-width="1"/></svg>
<div style="position:absolute;left:464px;top:386px;font:13.5px/26px 'Liberation Sans', sans-serif;letter-spacing:0.25px;color:#DFE1E5;white-space:pre">File</div>
<svg style="position:absolute;left:443px;top:416px" width="16" height="16" viewBox="0 0 16 16"><path d="M2.5 2.5h3.8l1.7 1.7h5.5a1 1 0 0 1 1 1v7.3a1 1 0 0 1-1 1h-11a1 1 0 0 1-1-1v-9a1 1 0 0 1 1-1z" fill="#43454A" stroke="#CED0D6" stroke-width="1"/><circle cx="6" cy="8.9" r="1.6" fill="none" stroke="#CED0D6" stroke-width="1"/></svg>
<div style="position:absolute;left:464px;top:412px;font:13.5px/26px 'Liberation Sans', sans-serif;letter-spacing:0.25px;color:#DFE1E5;white-space:pre">Package</div>
<svg style="position:absolute;left:443px;top:442px" width="16" height="16" viewBox="0 0 16 16"><path d="M2.7 11.2C2.7 8.3 5 6.7 8 6.7s5.3 1.6 5.3 4.5z" fill="none" stroke="#40CF80" stroke-width="1.25" stroke-linejoin="round"/><path d="M4.6 4.4l1.1 2.5M11.4 4.4l-1.1 2.5" stroke="#40CF80" stroke-width="1.2" stroke-linecap="round"/><circle cx="5.6" cy="9.4" r=".8" fill="#40CF80"/><circle cx="10.4" cy="9.4" r=".8" fill="#40CF80"/></svg>
<div style="position:absolute;left:464px;top:438px;font:13.5px/26px 'Liberation Sans', sans-serif;letter-spacing:0.25px;color:#DFE1E5;white-space:pre">Image Asset</div>
<svg style="position:absolute;left:443px;top:468px" width="16" height="16" viewBox="0 0 16 16"><path d="M2.7 11.2C2.7 8.3 5 6.7 8 6.7s5.3 1.6 5.3 4.5z" fill="none" stroke="#40CF80" stroke-width="1.25" stroke-linejoin="round"/><path d="M4.6 4.4l1.1 2.5M11.4 4.4l-1.1 2.5" stroke="#40CF80" stroke-width="1.2" stroke-linecap="round"/><circle cx="5.6" cy="9.4" r=".8" fill="#40CF80"/><circle cx="10.4" cy="9.4" r=".8" fill="#40CF80"/></svg>
<div style="position:absolute;left:464px;top:464px;font:13.5px/26px 'Liberation Sans', sans-serif;letter-spacing:0.25px;color:#DFE1E5;white-space:pre">Vector Asset</div>
<div style="position:absolute;left:439px;top:493px;width:214px;height:1px;background:#393B40"></div>
<svg style="position:absolute;left:443px;top:503px" width="16" height="16" viewBox="0 0 16 16"><path d="M8 1L1 15h7z" fill="#3A44C8"/><path d="M8 1L15 15h-7z" fill="#E04848"/><path d="M1 15L8 11 15 15z" fill="#22D022"/><path d="M8 1L4.5 10 8 11z" fill="#6A72E8"/><path d="M8 11L6.5 10.2 8 9z" fill="#2B2D30"/></svg>
<div style="position:absolute;left:464px;top:499px;font:13.5px/26px 'Liberation Sans', sans-serif;letter-spacing:0.25px;color:#DFE1E5;white-space:pre">CMakeLists.txt</div>
<svg style="position:absolute;left:443px;top:529px" width="16" height="16" viewBox="0 0 16 16"><path d="M1.8 5.6L8.9 7.6V15L1.8 13z" fill="#F6C744"/><path d="M8.2 7.4L8.9 7.6V15l-.7-.2z" fill="#FFF1B8"/><path d="M4.2 6.4l1.3 2.3 1.2-1.5z" fill="#2B2D30"/><path d="M8.9 7.6L10.8 8.2V11.7L15.2 10.6V13L8.9 15z" fill="#5E2D91"/><path d="M3.2 5.4C5.5 7 8.5 7.2 11 6c2.5-1.2.5-3.3-2-3.7" fill="none" stroke="#D64A64" stroke-width="1.4"/></svg>
<div style="position:absolute;left:464px;top:525px;font:13.5px/26px 'Liberation Sans', sans-serif;letter-spacing:0.25px;color:#DFE1E5;white-space:pre">PlantUML File</div>
<div style="position:absolute;left:439px;top:554px;width:214px;height:1px;background:#393B40"></div>
<div style="position:absolute;left:436px;top:560px;width:219px;height:24px;border-radius:4px;background:#2E436E"></div>
<svg style="position:absolute;left:443px;top:564px" width="16" height="16" viewBox="0 0 16 16"><path d="M2.7 11.2C2.7 8.3 5 6.7 8 6.7s5.3 1.6 5.3 4.5z" fill="none" stroke="#40CF80" stroke-width="1.25" stroke-linejoin="round"/><path d="M4.6 4.4l1.1 2.5M11.4 4.4l-1.1 2.5" stroke="#40CF80" stroke-width="1.2" stroke-linecap="round"/><circle cx="5.6" cy="9.4" r=".8" fill="#40CF80"/><circle cx="10.4" cy="9.4" r=".8" fill="#40CF80"/></svg>
<div style="position:absolute;left:464px;top:560px;font:13.5px/26px 'Liberation Sans', sans-serif;letter-spacing:0.25px;color:#DFE1E5;white-space:pre">Activity</div>
<svg style="position:absolute;left:633px;top:564px" width="16" height="16" viewBox="0 0 16 16"><path d="M6 4.5l3.5 3.5-3.5 3.5" fill="none" stroke="#CED0D6" stroke-width="1.1" stroke-linecap="round" stroke-linejoin="round"/></svg>
<svg style="position:absolute;left:443px;top:590px" width="16" height="16" viewBox="0 0 16 16"><path d="M2.7 11.2C2.7 8.3 5 6.7 8 6.7s5.3 1.6 5.3 4.5z" fill="none" stroke="#40CF80" stroke-width="1.25" stroke-linejoin="round"/><path d="M4.6 4.4l1.1 2.5M11.4 4.4l-1.1 2.5" stroke="#40CF80" stroke-width="1.2" stroke-linecap="round"/><circle cx="5.6" cy="9.4" r=".8" fill="#40CF80"/><circle cx="10.4" cy="9.4" r=".8" fill="#40CF80"/></svg>
<div style="position:absolute;left:464px;top:586px;font:13.5px/26px 'Liberation Sans', sans-serif;letter-spacing:0.25px;color:#DFE1E5;white-space:pre">Fragment</div>
<svg style="position:absolute;left:633px;top:590px" width="16" height="16" viewBox="0 0 16 16"><path d="M6 4.5l3.5 3.5-3.5 3.5" fill="none" stroke="#CED0D6" stroke-width="1.1" stroke-linecap="round" stroke-linejoin="round"/></svg>
<svg style="position:absolute;left:443px;top:616px" width="16" height="16" viewBox="0 0 16 16"><path d="M2.7 11.2C2.7 8.3 5 6.7 8 6.7s5.3 1.6 5.3 4.5z" fill="none" stroke="#40CF80" stroke-width="1.25" stroke-linejoin="round"/><path d="M4.6 4.4l1.1 2.5M11.4 4.4l-1.1 2.5" stroke="#40CF80" stroke-width="1.2" stroke-linecap="round"/><circle cx="5.6" cy="9.4" r=".8" fill="#40CF80"/><circle cx="10.4" cy="9.4" r=".8" fill="#40CF80"/></svg>
<div style="position:absolute;left:464px;top:612px;font:13.5px/26px 'Liberation Sans', sans-serif;letter-spacing:0.25px;color:#DFE1E5;white-space:pre">Folder</div>
<svg style="position:absolute;left:633px;top:616px" width="16" height="16" viewBox="0 0 16 16"><path d="M6 4.5l3.5 3.5-3.5 3.5" fill="none" stroke="#CED0D6" stroke-width="1.1" stroke-linecap="round" stroke-linejoin="round"/></svg>
<svg style="position:absolute;left:443px;top:642px" width="16" height="16" viewBox="0 0 16 16"><path d="M2.7 11.2C2.7 8.3 5 6.7 8 6.7s5.3 1.6 5.3 4.5z" fill="none" stroke="#40CF80" stroke-width="1.25" stroke-linejoin="round"/><path d="M4.6 4.4l1.1 2.5M11.4 4.4l-1.1 2.5" stroke="#40CF80" stroke-width="1.2" stroke-linecap="round"/><circle cx="5.6" cy="9.4" r=".8" fill="#40CF80"/><circle cx="10.4" cy="9.4" r=".8" fill="#40CF80"/></svg>
<div style="position:absolute;left:464px;top:638px;font:13.5px/26px 'Liberation Sans', sans-serif;letter-spacing:0.25px;color:#DFE1E5;white-space:pre">Service</div>
<svg style="position:absolute;left:633px;top:642px" width="16" height="16" viewBox="0 0 16 16"><path d="M6 4.5l3.5 3.5-3.5 3.5" fill="none" stroke="#CED0D6" stroke-width="1.1" stroke-linecap="round" stroke-linejoin="round"/></svg>
<svg style="position:absolute;left:443px;top:668px" width="16" height="16" viewBox="0 0 16 16"><path d="M2.7 11.2C2.7 8.3 5 6.7 8 6.7s5.3 1.6 5.3 4.5z" fill="none" stroke="#40CF80" stroke-width="1.25" stroke-linejoin="round"/><path d="M4.6 4.4l1.1 2.5M11.4 4.4l-1.1 2.5" stroke="#40CF80" stroke-width="1.2" stroke-linecap="round"/><circle cx="5.6" cy="9.4" r=".8" fill="#40CF80"/><circle cx="10.4" cy="9.4" r=".8" fill="#40CF80"/></svg>
<div style="position:absolute;left:464px;top:664px;font:13.5px/26px 'Liberation Sans', sans-serif;letter-spacing:0.25px;color:#DFE1E5;white-space:pre">UiComponent</div>
<svg style="position:absolute;left:633px;top:668px" width="16" height="16" viewBox="0 0 16 16"><path d="M6 4.5l3.5 3.5-3.5 3.5" fill="none" stroke="#CED0D6" stroke-width="1.1" stroke-linecap="round" stroke-linejoin="round"/></svg>
<svg style="position:absolute;left:443px;top:694px" width="16" height="16" viewBox="0 0 16 16"><path d="M2.7 11.2C2.7 8.3 5 6.7 8 6.7s5.3 1.6 5.3 4.5z" fill="none" stroke="#40CF80" stroke-width="1.25" stroke-linejoin="round"/><path d="M4.6 4.4l1.1 2.5M11.4 4.4l-1.1 2.5" stroke="#40CF80" stroke-width="1.2" stroke-linecap="round"/><circle cx="5.6" cy="9.4" r=".8" fill="#40CF80"/><circle cx="10.4" cy="9.4" r=".8" fill="#40CF80"/></svg>
<div style="position:absolute;left:464px;top:690px;font:13.5px/26px 'Liberation Sans', sans-serif;letter-spacing:0.25px;color:#DFE1E5;white-space:pre">Automotive</div>
<svg style="position:absolute;left:633px;top:694px" width="16" height="16" viewBox="0 0 16 16"><path d="M6 4.5l3.5 3.5-3.5 3.5" fill="none" stroke="#CED0D6" stroke-width="1.1" stroke-linecap="round" stroke-linejoin="round"/></svg>
<svg style="position:absolute;left:443px;top:720px" width="16" height="16" viewBox="0 0 16 16"><path d="M2.7 11.2C2.7 8.3 5 6.7 8 6.7s5.3 1.6 5.3 4.5z" fill="none" stroke="#40CF80" stroke-width="1.25" stroke-linejoin="round"/><path d="M4.6 4.4l1.1 2.5M11.4 4.4l-1.1 2.5" stroke="#40CF80" stroke-width="1.2" stroke-linecap="round"/><circle cx="5.6" cy="9.4" r=".8" fill="#40CF80"/><circle cx="10.4" cy="9.4" r=".8" fill="#40CF80"/></svg>
<div style="position:absolute;left:464px;top:716px;font:13.5px/26px 'Liberation Sans', sans-serif;letter-spacing:0.25px;color:#DFE1E5;white-space:pre">XML</div>
<svg style="position:absolute;left:633px;top:720px" width="16" height="16" viewBox="0 0 16 16"><path d="M6 4.5l3.5 3.5-3.5 3.5" fill="none" stroke="#CED0D6" stroke-width="1.1" stroke-linecap="round" stroke-linejoin="round"/></svg>
<svg style="position:absolute;left:443px;top:746px" width="16" height="16" viewBox="0 0 16 16"><path d="M2.7 11.2C2.7 8.3 5 6.7 8 6.7s5.3 1.6 5.3 4.5z" fill="none" stroke="#40CF80" stroke-width="1.25" stroke-linejoin="round"/><path d="M4.6 4.4l1.1 2.5M11.4 4.4l-1.1 2.5" stroke="#40CF80" stroke-width="1.2" stroke-linecap="round"/><circle cx="5.6" cy="9.4" r=".8" fill="#40CF80"/><circle cx="10.4" cy="9.4" r=".8" fill="#40CF80"/></svg>
<div style="position:absolute;left:464px;top:742px;font:13.5px/26px 'Liberation Sans', sans-serif;letter-spacing:0.25px;color:#DFE1E5;white-space:pre">Wear</div>
<svg style="position:absolute;left:633px;top:746px" width="16" height="16" viewBox="0 0 16 16"><path d="M6 4.5l3.5 3.5-3.5 3.5" fill="none" stroke="#CED0D6" stroke-width="1.1" stroke-linecap="round" stroke-linejoin="round"/></svg>
<div style="position:absolute;left:658px;top:553px;width:267px;height:300px;background:#2B2D30;border:1px solid #43454A;border-radius:8px;box-shadow:0 2px 10px rgba(0,0,0,0.25)"></div>
<svg style="position:absolute;left:673px;top:564px" width="16" height="16" viewBox="0 0 16 16"><path d="M2.7 11.2C2.7 8.3 5 6.7 8 6.7s5.3 1.6 5.3 4.5z" fill="none" stroke="#40CF80" stroke-width="1.25" stroke-linejoin="round"/><path d="M4.6 4.4l1.1 2.5M11.4 4.4l-1.1 2.5" stroke="#40CF80" stroke-width="1.2" stroke-linecap="round"/><circle cx="5.6" cy="9.4" r=".8" fill="#40CF80"/><circle cx="10.4" cy="9.4" r=".8" fill="#40CF80"/></svg>
<div style="position:absolute;left:694px;top:560px;font:13.5px/26px 'Liberation Sans', sans-serif;letter-spacing:0.25px;color:#DFE1E5;white-space:pre">Gallery...</div>
<div style="position:absolute;left:669px;top:589px;width:248px;height:1px;background:#393B40"></div>
<svg style="position:absolute;left:673px;top:599px" width="16" height="16" viewBox="0 0 16 16"><rect x="4.5" y="2.5" width="7" height="11" rx="1" fill="none" stroke="#CED0D6" stroke-width="1"/><path d="M4.5 5.5h7" stroke="#CED0D6" stroke-width="1"/></svg>
<div style="position:absolute;left:694px;top:595px;font:13.5px/26px 'Liberation Sans', sans-serif;letter-spacing:0.25px;color:#DFE1E5;white-space:pre">Android TV Blank Views Activity</div>
<svg style="position:absolute;left:673px;top:625px" width="16" height="16" viewBox="0 0 16 16"><rect x="4.5" y="2.5" width="7" height="11" rx="1" fill="none" stroke="#CED0D6" stroke-width="1"/><path d="M4.5 5.5h7" stroke="#CED0D6" stroke-width="1"/></svg>
<div style="position:absolute;left:694px;top:621px;font:13.5px/26px 'Liberation Sans', sans-serif;letter-spacing:0.25px;color:#DFE1E5;white-space:pre">Basic Views Activity</div>
<svg style="position:absolute;left:673px;top:651px" width="16" height="16" viewBox="0 0 16 16"><rect x="4.5" y="2.5" width="7" height="11" rx="1" fill="none" stroke="#CED0D6" stroke-width="1"/><path d="M4.5 5.5h7" stroke="#CED0D6" stroke-width="1"/></svg>
<div style="position:absolute;left:694px;top:647px;font:13.5px/26px 'Liberation Sans', sans-serif;letter-spacing:0.25px;color:#DFE1E5;white-space:pre">Bottom Navigation Views Activity</div>
<div style="position:absolute;left:666px;top:673px;width:253px;height:24px;border-radius:4px;background:#2E436E"></div>
<svg style="position:absolute;left:673px;top:677px" width="16" height="16" viewBox="0 0 16 16"><rect x="4.5" y="2.5" width="7" height="11" rx="1" fill="none" stroke="#CED0D6" stroke-width="1"/><path d="M4.5 5.5h7" stroke="#CED0D6" stroke-width="1"/></svg>
<div style="position:absolute;left:694px;top:673px;font:13.5px/26px 'Liberation Sans', sans-serif;letter-spacing:0.25px;color:#DFE1E5;white-space:pre">Empty Views Activity</div>
<svg style="position:absolute;left:673px;top:703px" width="16" height="16" viewBox="0 0 16 16"><rect x="4.5" y="2.5" width="7" height="11" rx="1" fill="none" stroke="#CED0D6" stroke-width="1"/><path d="M4.5 5.5h7" stroke="#CED0D6" stroke-width="1"/></svg>
<div style="position:absolute;left:694px;top:699px;font:13.5px/26px 'Liberation Sans', sans-serif;letter-spacing:0.25px;color:#DFE1E5;white-space:pre">Fragment + ViewModel</div>
<svg style="position:absolute;left:673px;top:729px" width="16" height="16" viewBox="0 0 16 16"><rect x="4.5" y="2.5" width="7" height="11" rx="1" fill="none" stroke="#CED0D6" stroke-width="1"/><path d="M4.5 5.5h7" stroke="#CED0D6" stroke-width="1"/></svg>
<div style="position:absolute;left:694px;top:725px;font:13.5px/26px 'Liberation Sans', sans-serif;letter-spacing:0.25px;color:#DFE1E5;white-space:pre">Fullscreen Views Activity</div>
<div style="position:absolute;left:0;top:0;width:951px;height:2px;background:#000"></div>
<div style="position:absolute;left:0;top:732px;width:951px;height:2px;background:#000"></div>
<div style="position:absolute;left:0;top:0;width:2px;height:734px;background:#000"></div>
<div style="position:absolute;left:949px;top:0;width:2px;height:734px;background:#000"></div>
</body></html>
